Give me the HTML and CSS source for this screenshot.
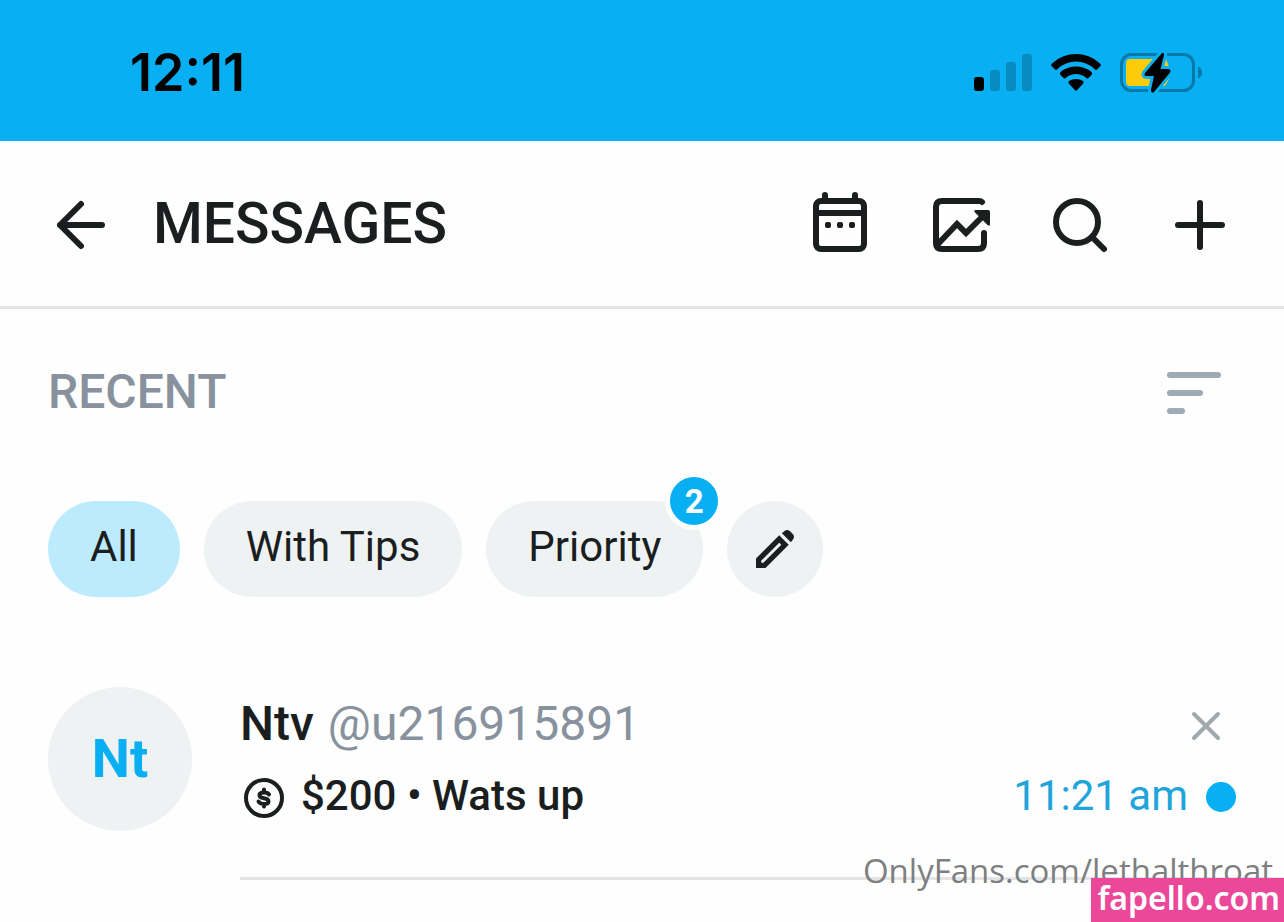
FILE: index.html
```html
<!DOCTYPE html>
<html lang="en">
<head>
<meta charset="utf-8">
<meta name="viewport" content="width=device-width, initial-scale=1">
<title>Messages</title>
<link rel="stylesheet" href="styles.css">
</head>
<body>
<div class="status">
  <time class="clock">12:11</time>
  <div class="indicators">
    <svg width="58" height="40" viewBox="0 0 58 40" aria-hidden="true">
      <rect x="0" y="24" width="10" height="14" rx="3"/>
      <g fill="#078bbf"><rect x="16" y="17" width="10" height="21" rx="3"/><rect x="32" y="9" width="10" height="29" rx="3"/><rect x="48" y="1" width="10" height="37" rx="3"/></g>
    </svg>
    <svg width="50" height="40" viewBox="0 0 50 40" aria-hidden="true">
      <path d="M1 10.500Q11 1 25 1T49 10.500Q50.500 12 49 13.500L46 16.500Q45 17.500 43.500 16Q35.500 8.500 25 8.500T6.500 16Q5 17.500 4 16.500L1 13.500Q-.5 12 1 10.500Z"/>
      <path d="M9.500 19Q16 13.500 25 13.500T40.500 19Q42 20.500 40.500 22L37.500 25Q36.500 26 35 24.700Q30.500 21 25 21T15 24.700Q13.500 26 12.500 25L9.500 22Q8 20.500 9.500 19Z"/>
      <path d="M18 28Q21 26 25 26T32 28Q33.500 29.300 32 30.800L26.200 37Q25 38.500 23.800 37L18 30.800Q16.500 29.300 18 28Z"/>
    </svg>
    <svg width="82" height="40" viewBox="0 0 82 40" aria-hidden="true">
      <rect x="1.500" y="1.500" width="72" height="36" rx="10" fill="none" stroke="#0679a7" stroke-width="3"/>
      <path d="M78 13.500Q82 15 82 19.500T78 25.500Z" fill="#0679a7"/>
      <path d="M10 6H46L49 14V26L45 33H10Q6 33 6 29V10Q6 6 10 6Z" fill="#fecb08"/>
      <path d="M42 0L25 20Q23.500 23 26.500 23H34L31 37Q31 41 34 39L50 19.500Q51.500 16 48 16H40.500L44 2Q44-1 42 0Z" stroke="#08aff2" stroke-width="6"/>
      <path d="M42 0L25 20Q23.500 23 26.500 23H34L31 37Q31 41 34 39L50 19.500Q51.500 16 48 16H40.500L44 2Q44-1 42 0Z"/>
    </svg>
  </div>
</div>

<header class="topbar">
  <button class="icon" aria-label="Back"><svg viewBox="0 0 72 72"><path d="M16 36H58M37 15L16 36L37 57"/></svg></button>
  <h1 class="title">MESSAGES</h1>
  <nav class="actions">
    <button class="icon" aria-label="Calendar"><svg viewBox="0 0 72 72"><rect x="12" y="12" width="48" height="48" rx="5"/><path d="M12 24H60M21 6V12M51 6V12"/><g class="solid"><rect x="21" y="33" width="6" height="6" rx="2"/><rect x="33" y="33" width="6" height="6" rx="2"/><rect x="45" y="33" width="6" height="6" rx="2"/></g></svg></button>
    <button class="icon" aria-label="Statistics"><svg viewBox="0 0 72 72"><path d="M58 13Q57 12 55 12H18Q12 12 12 18V54Q12 60 18 60H54Q60 60 60 54V44"/><path d="M13 56L33 35L42 44L59 27" stroke-linejoin="miter"/><path class="solid" d="M52 21H64Q66 21 66 23V35Q66 38 63.500 36L51 23.500Q49 21 52 21Z"/></svg></button>
    <button class="icon" aria-label="Search"><svg viewBox="0 0 72 72"><circle cx="33" cy="33" r="21"/><path d="M48 48L60 60"/></svg></button>
    <button class="icon" aria-label="New message"><svg viewBox="0 0 72 72"><path d="M14 36H58M36 14V58"/></svg></button>
  </nav>
</header>

<main>
  <div class="section">
    <h2 class="section-title">RECENT</h2>
    <button class="icon sort" aria-label="Sort"><svg viewBox="0 0 72 72"><path d="M12 18H60M12 36H42M12 54H24"/></svg></button>
  </div>

  <div class="filters">
    <button class="pill pill-active">All</button>
    <button class="pill">With Tips</button>
    <button class="pill">Priority<span class="badge">2</span></button>
    <button class="pill pill-round" aria-label="Edit lists"><svg width="38" height="38" viewBox="0 0 36 36" fill="#1b1e1f"><path fill-rule="evenodd" d="M0 27L22 5L31 14L9 36H0ZM5 29V31H7L24 14L22 12Z"/><path d="M24.500 3L27 1Q29.500-1 32 1L35 4Q37 6.500 35 9L33 11.500Z"/></svg></button>
  </div>

  <article class="chat">
    <div class="avatar">Nt</div>
    <div class="chat-body">
      <div class="row">
        <span class="name">Ntv</span>
        <span class="handle">@u216915891</span>
        <button class="close" aria-label="Remove chat"><svg width="30" height="30" viewBox="0 0 30 30"><path d="M3 3L27 27M27 3L3 27"/></svg></button>
      </div>
      <div class="row">
        <svg class="coin" width="48" height="48" viewBox="0 0 48 48" aria-hidden="true"><circle cx="24" cy="24" r="18" stroke-width="4"/><path d="M29 20.500Q28 18.500 24 18.500Q19.500 18.500 19.500 21T24 24.200T28.500 27.500T24 30Q20 30 18.500 27.500M24 15.500V18M24 30V32.500" stroke-width="4"/></svg>
        <span class="preview">$200 • Wats up</span>
        <time class="when">11:21 am</time>
        <span class="unread"></span>
      </div>
    </div>
  </article>
</main>

<div class="credit">OnlyFans.com/lethalthroat</div>
<div class="site">fapello.com</div>
</body>
</html>
```
FILE: styles.css
```css
* { box-sizing: border-box; }
body {
  position: relative;
  min-height: 100vh;
  margin: 0;
  overflow-x: hidden;
  background: #fefefe;
  color: #1b1e1f;
  font-family: Roboto, "Liberation Sans", sans-serif;
}
button {
  padding: 0;
  border: 0;
  background: none;
  color: inherit;
  font: inherit;
}
svg { display: block; }
h1, h2 { margin: 0; font-weight: 500; }

.status {
  display: flex;
  align-items: center;
  justify-content: space-between;
  padding: 43px 82px 38px 130px;
  background: #08aff2;
  color: #000;
}
.clock { font: 600 52px/60px Inter, sans-serif; }
.indicators { display: flex; gap: 19px; }

.topbar {
  display: flex;
  align-items: center;
  padding: 48px 48px 45px 44px;
  border-bottom: 3px solid #e3e4e5;
}
.title { margin-left: 37px; font-size: 57px; line-height: 70px; padding-bottom: 2px; }
.actions { display: flex; gap: 48px; margin-left: auto; }
.icon { flex: none; width: 72px; height: 72px; }
.icon svg {
  fill: none;
  stroke: #1b1e1f;
  stroke-width: 6px;
  stroke-linecap: round;
  stroke-linejoin: round;
}
.icon .solid { fill: #1b1e1f; stroke: none; }

.section {
  display: flex;
  align-items: center;
  justify-content: space-between;
  padding: 48px 54px 0 48px;
}
.section-title { padding-bottom: 2px; color: #87929e; font-size: 48px; line-height: 68px; }
.sort svg { stroke: #9cabb6; }

.filters { display: flex; gap: 24px; padding: 72px 48px 0; }
.pill {
  position: relative;
  height: 96px;
  padding: 0 42px 6px;
  border-radius: 48px;
  background: #eef2f3;
  font-size: 42px;
}
.pill-active { background: #bcebfd; }
.pill-round {
  display: grid;
  place-items: center;
  width: 96px;
  padding: 0;
}
.badge {
  position: absolute;
  top: -29px;
  right: -20px;
  width: 58px;
  height: 58px;
  border: 5px solid #fefefe;
  border-radius: 50%;
  background: #08aff2;
  color: #fff;
  font-size: 33px;
  font-weight: 700;
  line-height: 50px;
}

.chat { display: flex; gap: 48px; padding: 90px 0 0 48px; }
.avatar {
  flex: none;
  width: 144px;
  height: 144px;
  border-radius: 50%;
  background: #eef2f3;
  color: #08aff2;
  font-size: 54px;
  font-weight: 700;
  line-height: 144px;
  text-align: center;
}
.chat-body {
  flex: 1;
  padding: 0 48px 46px 0;
  border-bottom: 3px solid #e3e4e5;
}
.row { display: flex; align-items: center; height: 72px; }
.name { font-size: 48px; font-weight: 500; }
.handle { margin-left: 14px; color: #87929e; font-size: 48px; }
.close { margin: 6px 15px 0 auto; }
.close svg { fill: none; stroke: #a0a9ad; stroke-width: 4px; stroke-linecap: round; }
.coin { margin-top: 6px; fill: none; stroke: #1b1e1f; stroke-linecap: round; }
.preview { margin-left: 13px; font-size: 42px; font-weight: 500; }
.when { margin-left: auto; color: #1fa5dc; font-size: 42px; }
.unread {
  width: 30px;
  height: 30px;
  margin: 4px 0 0 18px;
  border-radius: 50%;
  background: #08aff2;
}

.credit {
  position: absolute;
  right: 11px;
  bottom: 28px;
  color: #7d7f80;
  font: 33px/46px "Open Sans", sans-serif;
}
.site {
  position: absolute;
  right: 0;
  bottom: 0;
  padding: 0 4px 4px 6px;
  background: #ec4899;
  color: #fff;
  font: 600 32px/40px "Noto Sans", sans-serif;
}
```
